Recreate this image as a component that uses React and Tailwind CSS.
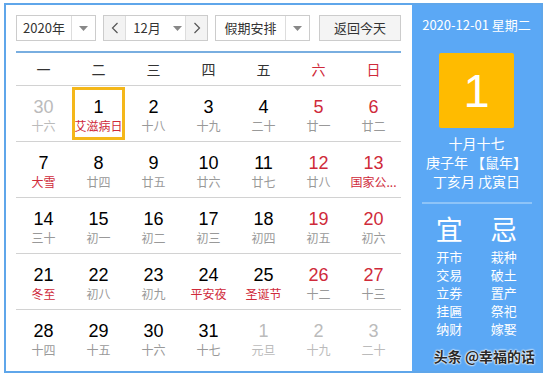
import React from 'react';

const RED = 'text-[#cf2a3a]';

// Days of December 2020 view, grouped by week
const weeks = [
  [
    { d: 30, l: '十六', out: true },
    { d: 1, l: '艾滋病日', lr: true, sel: true },
    { d: 2, l: '十八' },
    { d: 3, l: '十九' },
    { d: 4, l: '二十' },
    { d: 5, l: '廿一', we: true },
    { d: 6, l: '廿二', we: true },
  ],
  [
    { d: 7, l: '大雪', lr: true },
    { d: 8, l: '廿四' },
    { d: 9, l: '廿五' },
    { d: 10, l: '廿六' },
    { d: 11, l: '廿七' },
    { d: 12, l: '廿八', we: true },
    { d: 13, l: '国家公...', we: true, lr: true },
  ],
  [
    { d: 14, l: '三十' },
    { d: 15, l: '初一' },
    { d: 16, l: '初二' },
    { d: 17, l: '初三' },
    { d: 18, l: '初四' },
    { d: 19, l: '初五', we: true },
    { d: 20, l: '初六', we: true },
  ],
  [
    { d: 21, l: '冬至', lr: true },
    { d: 22, l: '初八' },
    { d: 23, l: '初九' },
    { d: 24, l: '平安夜', lr: true },
    { d: 25, l: '圣诞节', lr: true },
    { d: 26, l: '十二', we: true },
    { d: 27, l: '十三', we: true },
  ],
  [
    { d: 28, l: '十四' },
    { d: 29, l: '十五' },
    { d: 30, l: '十六' },
    { d: 31, l: '十七' },
    { d: 1, l: '元旦', out: true },
    { d: 2, l: '十九', out: true },
    { d: 3, l: '二十', out: true },
  ],
];

const weekdays = ['一', '二', '三', '四', '五', '六', '日'];

const yi = ['开市', '交易', '立券', '挂匾', '纳财'];
const ji = ['栽种', '破土', '置产', '祭祀', '嫁娶'];

const Caret = () => (
  <svg width="9" height="5" viewBox="0 0 9 5" className="fill-[#888]">
    <path d="M0 0h9L4.5 5z" />
  </svg>
);

const Chevron = ({ left }) => (
  <svg width="8" height="12" viewBox="0 0 8 12" fill="none" stroke="#555" strokeWidth="1.2">
    <path d={left ? 'M6.5 1 1.5 6l5 5' : 'M1.5 1l5 5-5 5'} />
  </svg>
);

const DayCell = ({ day }) => {
  const numColor = day.out ? 'text-[#bbb]' : day.we ? RED : 'text-black';
  const lunarColor = day.out ? 'text-[#bbb]' : day.lr ? RED : 'text-[#999]';
  return (
    <div className="flex h-[55px] items-center justify-center">
      <div
        className={`flex h-[53px] w-[53px] flex-col items-center border-[3px] ${
          day.sel ? 'border-[#f4b71a]' : 'border-transparent'
        }`}
      >
        <div className={`mt-[6px] font-['Liberation_Sans',Arial,sans-serif] text-[18px] leading-[22px] ${numColor}`}>
          {day.d}
        </div>
        <div className={`whitespace-nowrap text-[12px] leading-[16px] ${lunarColor}`}>{day.l}</div>
      </div>
    </div>
  );
};

export default function App() {
  return (
    <div className="h-[377px] w-[546px] bg-white pl-[4px] pt-[3px] font-['Microsoft_YaHei','Noto_Sans_CJK_SC',sans-serif]">
      <div className="flex h-[370px] w-[539px] border-2 border-[#5fa6ea]">
        {/* calendar */}
        <div className="w-[406px] pl-[10px] pt-[10px]">
          <div className="flex h-[26px] w-[385px] items-stretch text-[13px] text-[#333]">
            <div className="flex w-[80px] border border-[#ccc] bg-white">
              <div className="flex w-[55px] items-center justify-center border-r border-[#ddd]">2020年</div>
              <div className="flex flex-1 items-center justify-center">
                <Caret />
              </div>
            </div>
            <div className="ml-[7px] flex w-[105px] border border-[#ccc] bg-white">
              <div className="flex w-[22px] items-center justify-center border-r border-[#ddd] bg-[#f3f3f3]">
                <Chevron left />
              </div>
              <div className="flex flex-1 items-center justify-center gap-[12px] pl-[4px]">
                <span>12月</span>
                <Caret />
              </div>
              <div className="flex w-[22px] items-center justify-center border-l border-[#ddd] bg-[#f3f3f3]">
                <Chevron />
              </div>
            </div>
            <div className="ml-[7px] flex w-[95px] border border-[#ccc] bg-white">
              <div className="flex w-[70px] items-center justify-center border-r border-[#ddd]">假期安排</div>
              <div className="flex flex-1 items-center justify-center">
                <Caret />
              </div>
            </div>
            <div className="ml-[9px] flex w-[82px] items-center justify-center border border-[#ccc] bg-[#f4f4f4]">
              返回今天
            </div>
          </div>
          <div className="mt-[10px] h-[2px] w-[385px] bg-[#79aee0]" />
          <div className="grid h-[33px] w-[385px] grid-cols-7 border-b border-[#d2d2d2] text-[14px]">
            {weekdays.map((w, i) => (
              <div key={w} className={`flex items-center justify-center ${i > 4 ? RED : 'text-[#333]'}`}>
                {w}
              </div>
            ))}
          </div>
          {weeks.map((week, wi) => (
            <div
              key={wi}
              className={`grid w-[385px] grid-cols-7 ${wi < weeks.length - 1 ? 'border-b border-[#d2d2d2]' : ''}`}
            >
              {week.map((day, di) => (
                <DayCell key={di} day={day} />
              ))}
            </div>
          ))}
        </div>

        {/* side panel */}
        <div className="flex w-[129px] flex-col items-center bg-[#5ba8f5] text-white">
          <div className="mt-[11px] text-[13px] leading-[18px]">2020-12-01 星期二</div>
          <div className="mt-[19px] flex h-[75px] w-[75px] items-center justify-center rounded-[2px] bg-[#ffbb00] font-['Liberation_Sans',Arial,sans-serif] text-[47px] leading-none">
            1
          </div>
          <div className="mt-[6px] text-center text-[14px] leading-[19px]">
            <div>十月十七</div>
            <div>庚子年 【鼠年】</div>
            <div>丁亥月 戊寅日</div>
          </div>
          <div className="mt-[11px] h-[2px] w-[110px] bg-[#8ec4f8]" />
          <div className="mt-[6px] grid w-full grid-cols-2 px-[10px] text-center">
            <div className="text-[27px] leading-[38px]">宜</div>
            <div className="text-[27px] leading-[38px]">忌</div>
            <div className="text-[13px] leading-[18px]">
              {yi.map((t) => (
                <div key={t}>{t}</div>
              ))}
            </div>
            <div className="text-[13px] leading-[18px]">
              {ji.map((t) => (
                <div key={t}>{t}</div>
              ))}
            </div>
          </div>
          <div className="mt-[8px] self-end pr-[6px] text-[14px] font-bold leading-[20px] text-[#2a2a2a] [text-shadow:0_0_2px_#fff,0_0_2px_#fff,0_0_2px_#fff]">
            头条 @幸福的话
          </div>
        </div>
      </div>
    </div>
  );
}
